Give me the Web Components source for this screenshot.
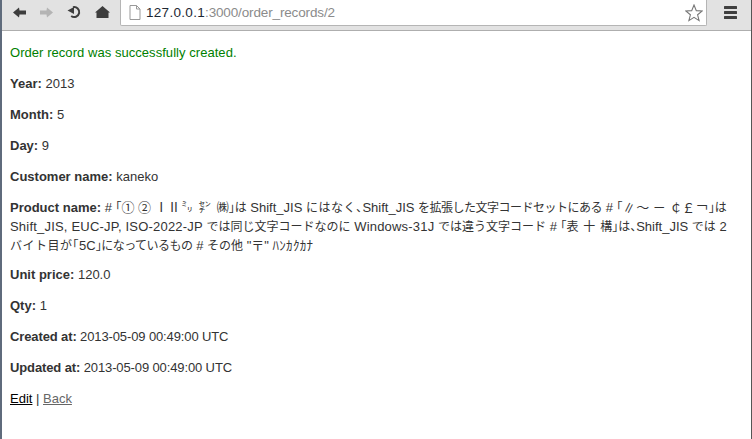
<!DOCTYPE html>
<html>
<head>
<meta charset="utf-8">
<title>Order record</title>
<style>
  html, body { margin: 0; padding: 0; height: 100%; background: #fff; }
  body { font-family: "Liberation Sans", "Noto Sans CJK JP", sans-serif; overflow: hidden; }
  .j { font-size: 12px; line-height: 0; }
  .roman { letter-spacing: -3px; }
  .sym { word-spacing: 2.5px; }
  .wide { word-spacing: 1.5px; }
  .tight { letter-spacing: -.5px; }
  .loose { letter-spacing: .5px; }
  .latin { letter-spacing: .2px; }
  .kana { font-size: 13px; letter-spacing: .3px; }
</style>
</head>
<body>
<browser-window>
  <browser-toolbar slot="bar" host-part="127.0.0.1" rest-part=":3000/order_records/2"></browser-toolbar>
  <flash-notice>Order record was successfully created.</flash-notice>
  <record-field label="Year">2013</record-field>
  <record-field label="Month">5</record-field>
  <record-field label="Day">9</record-field>
  <record-field label="Customer name">kaneko</record-field>
  <record-field class="long" label="Product name"># <span class="j">「</span>① ② <span style="letter-spacing:-4px">Ⅰ</span> <span class="roman">Ⅱ</span> <span class="j sym">㍉ ㌢ ㈱」は</span> Shift_JIS <span class="j loose">にはなく、</span>Shift_JIS <span class="j tight">を拡張した文字コードセットにある</span> # <span class="j">「</span><span style="letter-spacing:-3px">∥</span> ～ － <span style="letter-spacing:-4px">￠</span> <span style="letter-spacing:-3px">￡</span> ￢<span class="j">」は</span><br><span class="latin">Shift_JIS, EUC-JP, ISO-2022-JP</span> <span class="j">では同じ文字コードなのに</span> <span class="latin">Windows-31J</span> <span class="j">では違う文字コード</span> # <span class="j wide">「表 十 構」は、</span>Shift_JIS <span class="j">では</span> 2<br><span class="j loose">バイト目が「</span>5C<span class="j tight">」になっているもの</span> # <span class="j">その他</span> "〒" <span class="kana">ﾊﾝｶｸｶﾅ</span></record-field>
  <record-field label="Unit price">120.0</record-field>
  <record-field label="Qty">1</record-field>
  <record-field class="date" label="Created at">2013-05-09 00:49:00 UTC</record-field>
  <record-field class="date" label="Updated at">2013-05-09 00:49:00 UTC</record-field>
  <record-links></record-links>
</browser-window>

<script>
class BrowserWindow extends HTMLElement {
  constructor() {
    super()
    this.attachShadow({ mode: 'open' })
    this.shadowRoot.innerHTML = `
      <style>
        :host {
          display: flex;
          flex-direction: column;
          height: 439px;
          width: 752px;
          box-sizing: border-box;
          border-left: 2px solid #5f6b7c;
          border-right: 1px solid #555;
        }
        .page {
          flex: 1;
          padding: 14px 8px 0 8px;
          font-size: 13px;
          line-height: 15px;
          color: #333;
          font-feature-settings: "halt";
        }
      </style>
      <slot name="bar"></slot>
      <div class="page"><slot></slot></div>
    `
  }
}

class BrowserToolbar extends HTMLElement {
  constructor() {
    super()
    this.attachShadow({ mode: 'open' })
    this.shadowRoot.innerHTML = `
      <style>
        :host { display: flex; height: 31px; background: #e2e2e2; border-bottom: 1px solid #aeaeae; box-sizing: border-box; align-items: stretch; }
        .nav { display: flex; align-items: center; gap: 14px; padding: 0 0 6px 11px; width: 118px; box-sizing: border-box; }
        svg { display: block; flex: none; }
        .omni { flex: 1; height: 26px; background: #fff; border: 1px solid #b5b5b5; border-top: 0; border-radius: 0 0 2px 2px; display: flex; align-items: center; box-sizing: border-box; padding: 0 3px 0 8px; gap: 5px; }
        .url { flex: 1; font-size: 13.5px; letter-spacing: .3px; color: #1d2733; white-space: nowrap; }
        .url span { color: #8b8b8b; letter-spacing: -.14px; }
        .menu { width: 44px; display: flex; justify-content: center; padding: 6px 0 0 2px; box-sizing: border-box; }
      </style>
      <div class="nav">
        <svg width="13" height="11" viewBox="0 0 13 11"><path d="M0 5.5 L6 .5 L6.5 3.5 H13 V7.5 H6.5 L6 10.5 Z" fill="#3d3d3d"/></svg>
        <svg width="13" height="11" viewBox="0 0 13 11"><path d="M13 5.5 L7 .5 L6.5 3.5 H0 V7.5 H6.5 L7 10.5 Z" fill="#b4b4b4"/></svg>
        <svg width="14" height="14" viewBox="0 0 14 14"><path d="M6 2.2 A5 5 0 1 1 4.2 11" fill="none" stroke="#3d3d3d" stroke-width="2"/><path d="M.5 5.5 L7 2 V9 Z" fill="#3d3d3d"/></svg>
        <svg width="15" height="12" viewBox="0 0 15 12"><path d="M7.5 0 L15 6.5 H13.5 V12 H1.5 V6.5 H0 Z" fill="#3d3d3d"/></svg>
      </div>
      <div class="omni">
        <svg width="12" height="15" viewBox="0 0 12 15"><path d="M1 .5 H7.5 L11 4 V14.5 H1 Z M7.5 .5 V4 H11" fill="#fff" stroke="#999"/></svg>
        <div class="url">${this.getAttribute('host-part')}<span>${this.getAttribute('rest-part')}</span></div>
        <svg width="18" height="18" viewBox="0 0 18 18"><path d="M9 1 L11.3 6.6 L17.2 7 L12.6 10.8 L14.1 16.6 L9 13.4 L3.9 16.6 L5.4 10.8 L.8 7 L6.7 6.6 Z" fill="#fff" stroke="#777" stroke-width="1.1"/></svg>
      </div>
      <div class="menu">
        <svg width="13" height="13" viewBox="0 0 13 13"><path d="M1 0 H12 a1 1 0 0 1 0 3 H1 a1 1 0 0 1 0 -3 Z M1 5 H12 a1 1 0 0 1 0 3 H1 a1 1 0 0 1 0 -3 Z M1 10 H12 a1 1 0 0 1 0 3 H1 a1 1 0 0 1 0 -3 Z" fill="#3f3f3f"/></svg>
      </div>
    `
  }
}

class FlashNotice extends HTMLElement {
  constructor() {
    super()
    this.attachShadow({ mode: 'open' })
    this.shadowRoot.innerHTML = `
      <style>
        :host { display: block; color: green; margin-bottom: 16px; letter-spacing: .05px; }
      </style>
      <slot></slot>
    `
  }
}

class RecordField extends HTMLElement {
  constructor() {
    super()
    this.attachShadow({ mode: 'open' })
    this.shadowRoot.innerHTML = `
      <style>
        :host { display: block; margin-bottom: 16px; }
        :host(.long) { line-height: 19px; margin-top: -2px; margin-bottom: 12px; }
        :host(.date) { letter-spacing: -.12px; }
        b { font-weight: bold; }
      </style>
      <b>${this.getAttribute('label')}:</b> <slot></slot>
    `
  }
}

class RecordLinks extends HTMLElement {
  constructor() {
    super()
    this.attachShadow({ mode: 'open' })
    this.shadowRoot.innerHTML = `
      <style>
        :host { display: block; }
        a { text-decoration: underline; }
        .edit { color: #000; }
        .back { color: #666; }
      </style>
      <a class="edit" href="#">Edit</a> | <a class="back" href="#">Back</a>
    `
  }
}

customElements.define('browser-window', BrowserWindow)
customElements.define('browser-toolbar', BrowserToolbar)
customElements.define('flash-notice', FlashNotice)
customElements.define('record-field', RecordField)
customElements.define('record-links', RecordLinks)
</script>
</body>
</html>
